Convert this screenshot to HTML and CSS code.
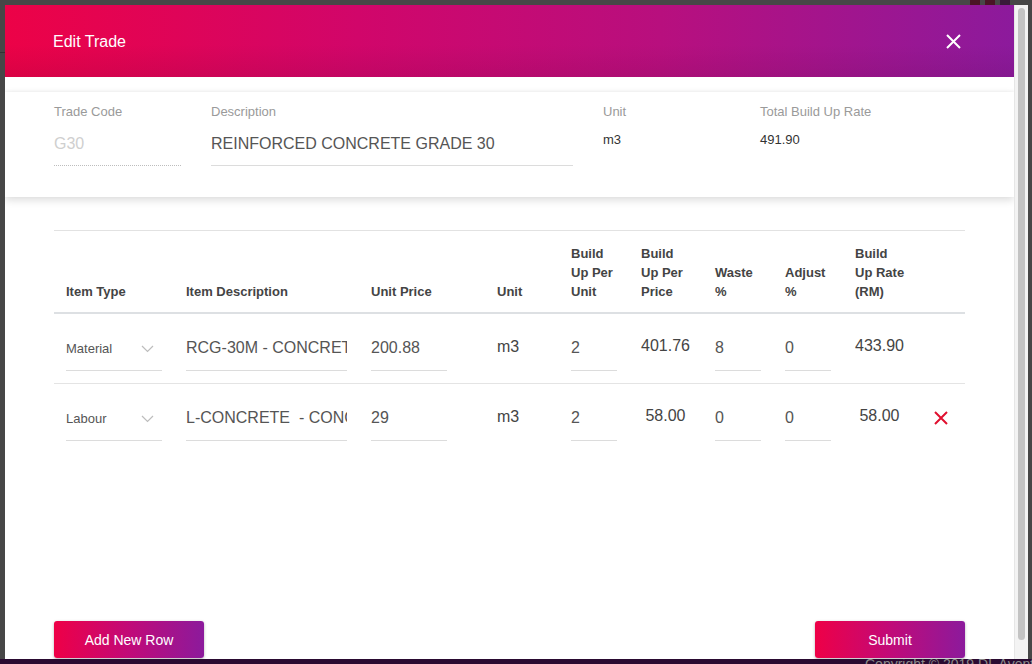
FILE: index.html
```html
<!DOCTYPE html>
<html>
<head>
<meta charset="utf-8">
<title>Edit Trade</title>
<link rel="stylesheet" href="styles.css">
</head>
<body>
<div class="under">
  <div class="under-top">
    <span class="ublk"></span><span class="ublk"></span><span class="ublk dark"></span>
  </div>
  <div class="under-side"></div>
  <div class="under-footer"><span>Copyright © 2019 DL Aventure. All rights reserved.</span></div>
</div>

<div class="overlay">
  <div class="modal">
    <header class="modal-head">
      <h1 class="modal-title">Edit Trade</h1>
      <button class="close" type="button" aria-label="Close">
        <svg width="15" height="15" viewBox="0 0 15 15"><path d="M1 1L14 14M14 1L1 14" stroke="#fff" stroke-width="2" fill="none"/></svg>
      </button>
    </header>

    <div class="modal-body">
      <section class="card">
        <div class="field f-code">
          <label class="lbl">Trade Code</label>
          <input class="in in-card in-disabled" type="text" value="G30" readonly>
        </div>
        <div class="field f-desc">
          <label class="lbl">Description</label>
          <input class="in in-card" type="text" value="REINFORCED CONCRETE GRADE 30">
        </div>
        <div class="field f-unit">
          <label class="lbl">Unit</label>
          <div class="val">m3</div>
        </div>
        <div class="field f-total">
          <label class="lbl">Total Build Up Rate</label>
          <div class="val">491.90</div>
        </div>
      </section>

      <table class="items">
        <colgroup>
          <col class="c-type"><col class="c-desc"><col class="c-price"><col class="c-unit">
          <col class="c-bpu"><col class="c-bpp"><col class="c-waste"><col class="c-adj">
          <col class="c-rate"><col class="c-act">
        </colgroup>
        <thead>
          <tr>
            <th>Item Type</th>
            <th>Item Description</th>
            <th>Unit Price</th>
            <th>Unit</th>
            <th>Build Up Per Unit</th>
            <th>Build Up Per Price</th>
            <th>Waste %</th>
            <th>Adjust %</th>
            <th>Build Up Rate (RM)</th>
            <th></th>
          </tr>
        </thead>
        <tbody>
          <tr>
            <td><div class="sel"><span>Material</span><svg width="13" height="8" viewBox="0 0 13 8"><path d="M1 1L6.5 6.5L12 1" stroke="#bdbdbd" stroke-width="1.2" fill="none"/></svg></div></td>
            <td><input class="in w-desc" type="text" value="RCG-30M - CONCRETE GRADE 30"></td>
            <td><input class="in w-price" type="text" value="200.88"></td>
            <td><div class="txt txt-low">m3</div></td>
            <td><input class="in w-num" type="text" value="2"></td>
            <td><div class="txt">401.76</div></td>
            <td><input class="in w-num" type="text" value="8"></td>
            <td><input class="in w-num" type="text" value="0"></td>
            <td><div class="txt">433.90</div></td>
            <td></td>
          </tr>
          <tr>
            <td><div class="sel"><span>Labour</span><svg width="13" height="8" viewBox="0 0 13 8"><path d="M1 1L6.5 6.5L12 1" stroke="#bdbdbd" stroke-width="1.2" fill="none"/></svg></div></td>
            <td><input class="in w-desc" type="text" value="L-CONCRETE  - CONCRETE WORKS"></td>
            <td><input class="in w-price" type="text" value="29"></td>
            <td><div class="txt txt-low">m3</div></td>
            <td><input class="in w-num" type="text" value="2"></td>
            <td><div class="txt">&nbsp;58.00</div></td>
            <td><input class="in w-num" type="text" value="0"></td>
            <td><input class="in w-num" type="text" value="0"></td>
            <td><div class="txt">&nbsp;58.00</div></td>
            <td class="act"><button class="del" type="button" aria-label="Delete row"><svg width="14" height="14" viewBox="0 0 14 14"><path d="M1 1L13 13M13 1L1 13" stroke="#e0102f" stroke-width="2" fill="none"/></svg></button></td>
          </tr>
        </tbody>
      </table>

      <div class="actions">
        <button class="btn" type="button">Add New Row</button>
        <button class="btn" type="button">Submit</button>
      </div>
    </div>
  </div>
  <div class="scrollbar"><div class="thumb"></div></div>
</div>
</body>
</html>
```

FILE: styles.css
```css
* { box-sizing: border-box; }

html, body {
  margin: 0;
  padding: 0;
}

body {
  width: 1032px;
  height: 664px;
  overflow: hidden;
  background: #474747;
  font-family: "Liberation Sans", Arial, sans-serif;
  position: relative;
}

/* underlying (dimmed) page */
.under {
  position: absolute;
  inset: 0;
  z-index: 0;
}

.under-top {
  position: absolute;
  top: 0;
  right: 22px;
  display: flex;
  gap: 5px;
}

.ublk {
  width: 10px;
  height: 5px;
  background: #4a1526;
}

.ublk.dark { background: #3a1a3a; }

.under-side {
  position: absolute;
  left: 0;
  top: 52px;
  width: 5px;
  height: 1px;
  background: #333;
}

.under-footer {
  position: absolute;
  left: 0;
  right: 0;
  bottom: 0;
  height: 5px;
  background: #2a0a31;
  overflow: hidden;
}

.under-footer span {
  position: absolute;
  left: 865px;
  top: -3px;
  font-size: 14px;
  line-height: 16px;
  color: #8a8a8a;
  white-space: nowrap;
}

/* overlay */
.overlay {
  position: relative;
  z-index: 1;
  display: flex;
  padding: 5px 0 0 5px;
}

.modal {
  width: 1009px;
  height: 654px;
  background: #fff;
  display: flex;
  flex-direction: column;
  overflow: hidden;
}

.modal-head {
  height: 72px;
  flex: none;
  display: flex;
  align-items: center;
  justify-content: space-between;
  padding: 1px 53px 0 48px;
  background:
    linear-gradient(to bottom, rgba(0,0,0,0) 55%, rgba(60,0,40,0.10) 100%),
    linear-gradient(to right, #ec0247 0%, #d1066a 35%, #b80f7e 65%, #8c1a9c 100%);
}

.modal-title {
  margin: 0;
  font-size: 16px;
  font-weight: normal;
  color: #fff;
  line-height: 20px;
}

.close {
  border: none;
  background: none;
  padding: 0;
  width: 15px;
  height: 15px;
  display: block;
  cursor: pointer;
}

.close svg { display: block; }

.modal-body {
  flex: 1;
  display: flex;
  flex-direction: column;
  padding-top: 15px;
}

/* info card */
.card {
  display: flex;
  gap: 30px;
  padding: 12px 49px 31px;
  background: #fff;
  box-shadow: 0 3px 8px rgba(0,0,0,0.14), 0 -1px 3px rgba(0,0,0,0.04);
}

.field {
  display: flex;
  flex-direction: column;
}

.f-code { width: 127px; }
.f-desc { width: 362px; }
.f-unit { width: 127px; }
.f-total { width: 160px; }

.lbl {
  font-size: 13px;
  line-height: 16px;
  color: #9a9a9a;
}

.in {
  display: block;
  border: none;
  border-bottom: 1px solid #dcdcdc;
  border-radius: 0;
  background: transparent;
  outline: none;
  font-family: "Liberation Sans", Arial, sans-serif;
  font-size: 16px;
  color: #555;
  padding: 0 0 7px;
  height: 38px;
  margin: 0;
}

.in-card {
  margin-top: 7px;
  height: 39px;
  padding-bottom: 5px;
  width: 100%;
}

.in-disabled {
  color: #cfcfcf;
  border-bottom: 1px dotted #bdbdbd;
}

.val {
  margin-top: 12px;
  font-size: 13px;
  line-height: 16px;
  color: #333;
}

/* items table */
.items {
  margin: 33px 48px 0 49px;
  width: 911px;
  table-layout: fixed;
  border-collapse: collapse;
}

.c-type { width: 120px; }
.c-desc { width: 185px; }
.c-price { width: 126px; }
.c-unit { width: 74px; }
.c-bpu { width: 70px; }
.c-bpp { width: 74px; }
.c-waste { width: 70px; }
.c-adj { width: 70px; }
.c-rate { width: 74px; }
.c-act { width: 48px; }

.items thead tr {
  border-top: 1px solid #e2e2e2;
  border-bottom: 2px solid #dde0e3;
}

.items th {
  text-align: left;
  vertical-align: bottom;
  font-size: 13px;
  font-weight: bold;
  color: #444;
  line-height: 19px;
  padding: 13px 12px 11px;
}

.items tbody tr:first-child {
  border-bottom: 1px solid #e4e4e4;
}

.items td {
  vertical-align: top;
  padding: 19px 12px 12px;
}

.w-desc { width: 161px; }
.w-price { width: 76px; }
.w-num { width: 46px; }

.sel {
  width: 96px;
  height: 38px;
  padding-bottom: 7px;
  border-bottom: 1px solid #dcdcdc;
  display: flex;
  align-items: center;
  justify-content: space-between;
  padding-right: 8px;
  font-size: 13px;
  color: #555;
}

.sel svg { display: block; margin-top: 1px; }

.txt {
  font-size: 16px;
  line-height: 26px;
  color: #444;
  white-space: nowrap;
}

.txt-low { line-height: 28px; }

.items td.act {
  padding: 27px 12px 0 17px;
}

.del {
  border: none;
  background: none;
  padding: 0;
  width: 14px;
  height: 14px;
  display: block;
  cursor: pointer;
}

.del svg { display: block; }

/* footer buttons */
.actions {
  margin-top: auto;
  display: flex;
  justify-content: space-between;
  padding: 0 49px 1px 49px;
}

.btn {
  width: 150px;
  height: 37px;
  border: none;
  border-radius: 3px;
  background: linear-gradient(to right, #ee0047 0%, #c10a78 50%, #8c1a9c 100%);
  color: #fff;
  font-family: "Liberation Sans", Arial, sans-serif;
  font-size: 14px;
  box-shadow: 0 1px 3px rgba(0,0,0,0.3);
  cursor: pointer;
}

/* scrollbar */
.scrollbar {
  width: 14px;
  height: 654px;
  background: #f3f3f3;
  border-left: 1px solid #e6e6e6;
  padding: 3px 3px 0 3px;
}

.thumb {
  height: 632px;
  border-radius: 4px;
  background: #c3c3c3;
}
```
